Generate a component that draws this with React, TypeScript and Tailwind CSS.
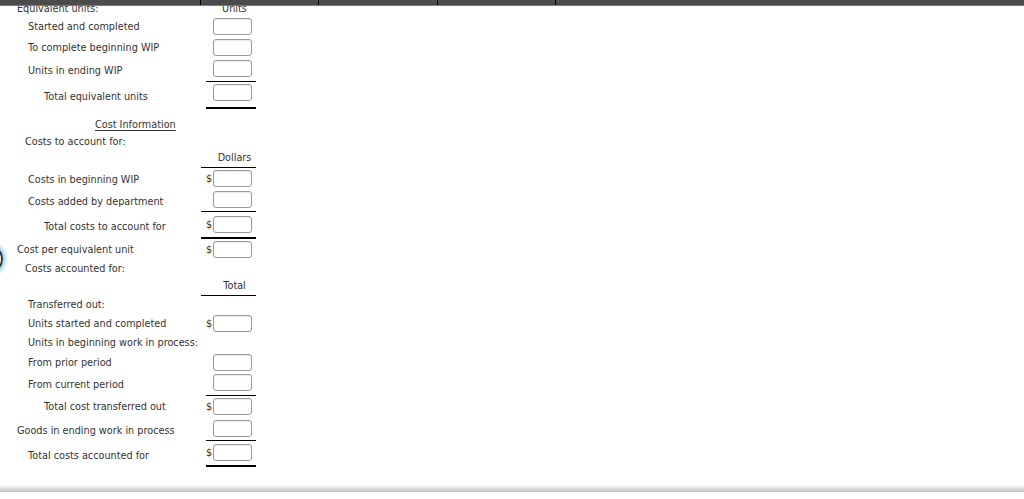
import React from "react";

type RowProps = {
  label?: string;
  indent?: number;
  dollar?: boolean;
  pt?: string;
  mt?: string;
};

const indentCls: Record<number, string> = {
  0: "pl-[17px]",
  1: "pl-[28px]",
  2: "pl-[44px]",
  3: "pl-[25px]",
  4: "pl-[95px]",
};

function Box() {
  return (
    <div className="w-[39px] h-[17px] border border-[#9a9a9a] rounded-[3px] bg-white shadow-[inset_0_1px_1px_rgba(0,0,0,0.08)]" />
  );
}

function BoxRow({ label, indent = 1, dollar, pt = "pt-0", mt = "mt-0" }: RowProps) {
  return (
    <div className={`flex h-[17px] ${mt}`}>
      <div className={`w-[206px] shrink-0 h-full flex items-center ${pt} ${indentCls[indent]} whitespace-nowrap`}>
        {label}
      </div>
      <div className="flex items-center w-[50px]">
        <span className="w-[7px] leading-none">{dollar ? "$" : ""}</span>
        <Box />
      </div>
    </div>
  );
}

function TextRow({ label, indent = 1, mt = "mt-0", underline }: { label: string; indent?: number; mt?: string; underline?: boolean }) {
  return (
    <div className={`flex items-center h-[14px] ${mt} ${indentCls[indent]} whitespace-nowrap`}>
      <span className={underline ? "underline underline-offset-2" : ""}>{label}</span>
    </div>
  );
}

function Line({ wide, thick, mt = "mt-0" }: { wide?: boolean; thick?: boolean; mt?: string }) {
  return (
    <div
      className={`${mt} ${wide ? "ml-[201px] w-[55px]" : "ml-[206px] w-[50px]"} ${
        thick ? "h-[2px]" : "h-px"
      } bg-black`}
    />
  );
}

function Head({ text, mt = "mt-0" }: { text: string; mt?: string }) {
  return (
    <div className={`flex items-center h-[14px] ${mt}`}>
      <div className="w-[213px] shrink-0" />
      <div className="w-[43px] text-center">{text}</div>
    </div>
  );
}

export default function App() {
  return (
    <div
      className="relative w-[1024px] h-[499px] overflow-hidden bg-white text-[#333] text-[9.7px] leading-[14px]"
      style={{ fontFamily: '"DejaVu Sans", Verdana, sans-serif' }}
    >
      {/* top header bar overlay */}
      <div className="absolute top-0 left-0 w-full h-[6px] bg-[#4b4b4b] border-b border-[#7a7a7a] z-10">
        <div className="absolute left-[200px] top-0 h-full w-px bg-black" />
        <div className="absolute left-[318px] top-0 h-full w-px bg-black" />
        <div className="absolute left-[437px] top-0 h-full w-px bg-black" />
        <div className="absolute left-[555px] top-0 h-full w-px bg-black" />
      </div>

      {/* focused radio edge */}
      <div className="absolute left-[-25px] top-[245px] w-[28px] h-[28px] rounded-full border-2 border-[#333] shadow-[0_0_4px_2px_#7cc8ff]" />

      <div className="flex flex-col">
        <div className="flex items-center h-[14px] mt-[2px]">
          <div className="w-[213px] shrink-0 pl-[17px]">Equivalent units:</div>
          <div className="w-[43px] text-center">Units</div>
        </div>
        <BoxRow label="Started and completed" mt="mt-[2px]" />
        <BoxRow label="To complete beginning WIP" mt="mt-[4px]" pt="pt-[1px]" />
        <BoxRow label="Units in ending WIP" mt="mt-[4px]" pt="pt-[4px]" />
        <Line mt="mt-[4px]" />
        <BoxRow label="Total equivalent units" indent={2} mt="mt-[2px]" pt="pt-[8px]" />
        <Line thick mt="mt-[6px]" />

        <TextRow label="Cost Information" indent={4} underline mt="mt-[9px]" />
        <TextRow label="Costs to account for:" indent={3} mt="mt-[3px]" />
        <Head text="Dollars" mt="mt-[2px]" />
        <Line wide mt="mt-[2px]" />
        <BoxRow label="Costs in beginning WIP" dollar mt="mt-[2px]" pt="pt-[3px]" />
        <BoxRow label="Costs added by department" mt="mt-[4px]" pt="pt-[4px]" />
        <Line wide mt="mt-[3px]" />
        <BoxRow label="Total costs to account for" indent={2} dollar mt="mt-[4px]" pt="pt-[5px]" />
        <Line wide thick mt="mt-[4px]" />
        <BoxRow label="Cost per equivalent unit" indent={0} dollar mt="mt-[2px]" pt="pt-[1px]" />
        <TextRow label="Costs accounted for:" indent={3} mt="mt-[4px]" />
        <Head text="Total" mt="mt-[3px]" />
        <Line wide mt="mt-[2px]" />
        <TextRow label="Transferred out:" mt="mt-[2px]" />
        <BoxRow label="Units started and completed" dollar mt="mt-[3px]" />
        <TextRow label="Units in beginning work in process:" mt="mt-[4px]" />
        <BoxRow label="From prior period" mt="mt-[4px]" />
        <BoxRow label="From current period" mt="mt-[3px]" pt="pt-[4px]" />
        <Line mt="mt-[4px]" />
        <BoxRow label="Total cost transferred out" indent={2} dollar mt="mt-[2px]" pt="pt-[1px]" />
        <BoxRow label="Goods in ending work in process" indent={0} mt="mt-[5px]" pt="pt-[4px]" />
        <Line mt="mt-[3px]" />
        <BoxRow label="Total costs accounted for" dollar mt="mt-[3px]" pt="pt-[6px]" />
        <Line thick mt="mt-[4px]" />

        <div className="mt-[19px] h-[6px] w-full bg-gradient-to-b from-[#f4f4f4] to-[#c2c2c2]" />
      </div>
    </div>
  );
}
